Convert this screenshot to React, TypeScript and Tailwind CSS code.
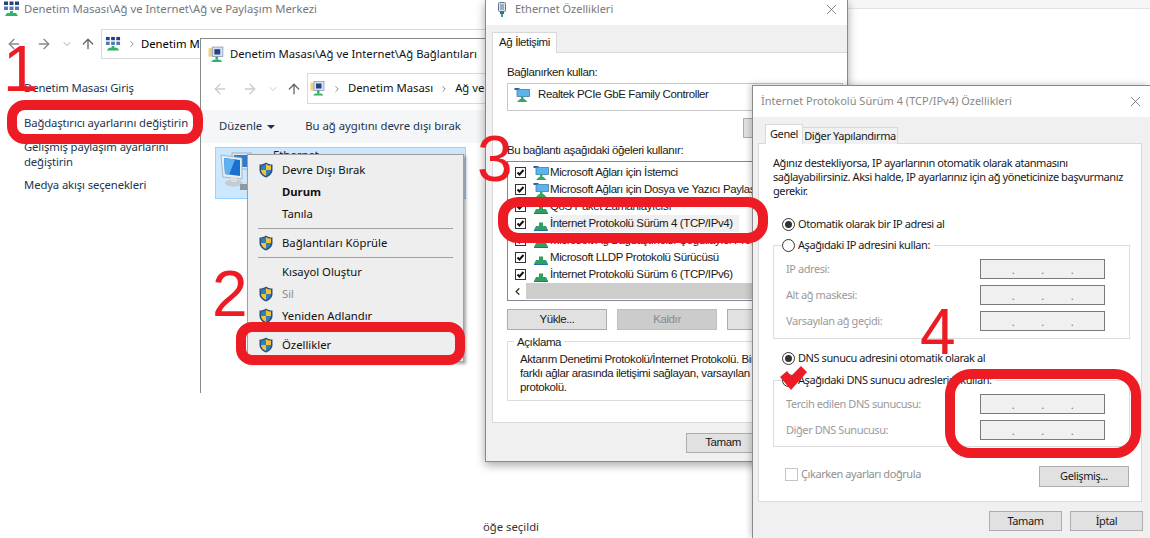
import React from 'react';
import { ArrowLeft, ArrowRight, ArrowUp, ChevronDown, ChevronLeft, ChevronRight, X } from 'lucide-react';

const NetIcon = ({ className = '' }: { className?: string }) => (
  <svg viewBox="0 0 16 16" className={`shrink-0 ${className}`}>
    <rect x="0.500" y="1" width="5" height="2" fill="#2b5f9a" />
    <rect x="3" y="2.500" width="12.500" height="7" fill="#5cb4ec" stroke="#3f7fb0" strokeWidth="0.8" />
    <rect x="7" y="9.500" width="2.500" height="3" fill="#35a860" />
    <path d="M3 15l3-3h4.500l3 3z" fill="#35a860" />
  </svg>
);

const GreenNet = () => (
  <svg viewBox="0 0 16 16" className="w-[16px] h-[16px] shrink-0">
    <path d="M6 6.500h4v3.500h3l2 4H1l2-4h3z" fill="#2f9f62" />
    <rect x="1" y="14" width="14" height="1" fill="#1f6fa8" />
  </svg>
);

const PanelIcon = ({ className = '' }: { className?: string }) => (
  <svg viewBox="0 0 17 16" className={`shrink-0 ${className}`}>
    <rect x="1" y="0.500" width="4" height="3.500" fill="#27407f" />
    <rect x="6.500" y="0.500" width="4" height="3.500" fill="#27407f" />
    <rect x="12" y="0.500" width="4" height="3.500" fill="#27407f" />
    <rect x="1" y="5.500" width="4" height="3.500" fill="#4f78b8" />
    <rect x="6.500" y="5.500" width="4" height="3.500" fill="#4f78b8" />
    <rect x="12" y="5.500" width="4" height="3.500" fill="#4f78b8" />
    <path d="M7 10h3v2h3l2 3H2l2-3h3z" fill="#33b06a" />
  </svg>
);

const FolderNetIcon = ({ className = '' }: { className?: string }) => (
  <svg viewBox="0 0 16 16" className={`shrink-0 ${className}`}>
    <rect x="0.500" y="2" width="5" height="8" fill="#efd27a" />
    <rect x="4" y="1" width="10" height="9" fill="#d7e2f2" stroke="#7f93b8" strokeWidth="0.7" />
    <rect x="6" y="3" width="5.500" height="5" fill="#27407f" />
    <rect x="7" y="10" width="2.500" height="3" fill="#33b06a" />
    <path d="M3 15l2-2h6.500l2 2z" fill="#33b06a" />
  </svg>
);

const PlugIcon = () => (
  <svg viewBox="0 0 10 15" className="w-[10px] h-[15px] shrink-0">
    <rect x="1.500" y="0.500" width="7" height="9" rx="1" fill="#dce5ee" stroke="#61768c" strokeWidth="1" />
    <rect x="3.500" y="2" width="1" height="6" fill="#61768c" />
    <rect x="5.500" y="2" width="1" height="6" fill="#61768c" />
    <rect x="3" y="9.500" width="4" height="2.500" fill="#2d6ea8" />
    <rect x="4" y="12" width="2" height="3" fill="#33b06a" />
  </svg>
);

const PcIcon = () => (
  <svg viewBox="0 0 34 40" className="w-[34px] h-[40px] shrink-0">
    <rect x="13" y="2" width="19" height="16" fill="#dfe7ef" stroke="#8fa3b5" strokeWidth="0.8" />
    <rect x="15" y="4" width="15" height="12" fill="#2e7ccb" />
    <path d="M2 4l21 3v21L4 26z" fill="#e6edf3" stroke="#9aaaba" strokeWidth="0.8" />
    <path d="M5 7l16 2v16L6 23z" fill="#1a6fd0" />
    <path d="M5 7l11 1.500-6 15.500-4-1z" fill="#5fb0f0" />
    <ellipse cx="15" cy="32" rx="9" ry="3.500" fill="#c4ccd2" />
    <rect x="12" y="26" width="6" height="5" fill="#d7dde2" />
    <rect x="21" y="33" width="9" height="6" fill="#8f989f" />
  </svg>
);

const Shield = () => (
  <svg viewBox="0 0 14 16" className="w-[14px] h-[16px] shrink-0">
    <path d="M7 0.500C5 2 3 2.500 0.500 2.500V8c0 3.500 3 6 6.500 7.500 3.500-1.500 6.500-4 6.500-7.500V2.500C11 2.500 9 2 7 0.500z" fill="#2a4f7c" />
    <path d="M7 2v6H2V3.600C4 3.500 5.500 3 7 2z" fill="#2f7fc0" />
    <path d="M7 2c1.500 1 3 1.500 5 1.600V8H7z" fill="#f0c435" />
    <path d="M2 8h5v6C4.500 13 2.200 11 2 8z" fill="#f0c435" />
    <path d="M7 8h5c-.2 3-2.500 5-5 6z" fill="#2f7fc0" />
  </svg>
);

const Check = () => (
  <span className="w-[11px] h-[11px] border border-[#333] bg-white flex items-center justify-center shrink-0">
    <svg viewBox="0 0 9 9" className="w-[9px] h-[9px]">
      <path d="M1.500 4.500l2 2 4-4.500" fill="none" stroke="#111" strokeWidth="2" />
    </svg>
  </span>
);

const Radio = ({ on }: { on?: boolean }) => (
  <span className="w-[13px] h-[13px] rounded-full border border-[#333] bg-white flex items-center justify-center shrink-0">
    {on && <span className="w-[7px] h-[7px] rounded-full bg-[#333]" />}
  </span>
);

const MenuRow = ({ label, shield, bold, muted }: { label: string; shield?: boolean; bold?: boolean; muted?: boolean }) => (
  <div className="h-[22px] flex items-center pl-[11px]">
    <span className="w-[23px] shrink-0">{shield && <Shield />}</span>
    <span className={`${bold ? 'font-bold text-[#111]' : muted ? 'text-[#8f8f8f]' : 'text-[#111]'}`}>{label}</span>
  </div>
);

const ListRow = ({ label, net, bg }: { label: string; net?: boolean; bg?: boolean }) => (
  <div className="h-[17px] flex items-center pl-[7px]">
    <Check />
    <span className="ml-[7px]">{net ? <NetIcon className="w-[16px] h-[16px]" /> : <GreenNet />}</span>
    <span className={`whitespace-nowrap ml-[1px] pr-[6px] ${bg ? 'bg-[#f0f0f0]' : ''}`}>{label}</span>
  </div>
);

const IpField = ({ label }: { label: string }) => (
  <div className="h-[20px] flex items-center justify-between pl-[12px] pr-[24px] mb-[6px]">
    <span className="text-[#9a9a9a]">{label}</span>
    <span className="w-[125px] h-[20px] border border-[#7a7a7a] bg-[#f0f0f0] flex items-center justify-center gap-[27px] text-[#777] leading-none">
      <span>.</span>
      <span>.</span>
      <span>.</span>
    </span>
  </div>
);

const Btn = ({ label, className = '' }: { label: string; className?: string }) => (
  <div className={`h-[21px] border border-[#adadad] bg-[#e1e1e1] flex items-center justify-center shrink-0 ${className}`}>{label}</div>
);

const Ring = ({ className }: { className: string }) => (
  <div className={`absolute border-[10px] border-[#ed1c24] ${className}`} />
);

const Digit = ({ value, className }: { value: string; className: string }) => (
  <div className={`absolute text-[64px] leading-none text-[#ed1c24] font-['Liberation_Sans',sans-serif] ${className}`}>{value}</div>
);

const App: React.FC = () => {
  return (
    <div className="relative w-[1150px] h-[538px] overflow-hidden bg-white text-[11.3px] text-[#1a1a1a] font-['Noto_Sans',sans-serif]">

      {/* Ağ ve Paylaşım Merkezi */}
      <div className="absolute left-0 top-0 w-[486px] h-[538px]">
        <div className="h-[18px] pl-[3px] flex items-center gap-[4px] text-[#777]">
          <PanelIcon className="w-[17px] h-[16px]" />
          <span className="whitespace-nowrap">Denetim Masası\Ağ ve Internet\Ağ ve Paylaşım Merkezi</span>
        </div>
        <div className="mt-[11px] h-[30px] flex items-center pl-[6px]">
          <ArrowLeft size={16} className="text-[#888] shrink-0" />
          <ArrowRight size={16} className="text-[#888] shrink-0 ml-[14px]" />
          <ChevronDown size={12} className="text-[#aaa] shrink-0 ml-[9px]" />
          <ArrowUp size={16} className="text-[#666] shrink-0 ml-[7px]" />
          <div className="ml-[5px] flex-1 h-[30px] border border-[#d9d9d9] flex items-center pl-[3px]">
            <PanelIcon className="w-[16px] h-[16px]" />
            <ChevronRight size={10} className="text-[#777] ml-[6px]" />
            <span className="ml-[4px] whitespace-nowrap text-black">Denetim Masası</span>
          </div>
        </div>
        <div className="pl-[24px] leading-[15px] text-[#1c3450] tracking-[-0.12px]">
          <div className="mt-[21px]">Denetim Masası Giriş</div>
          <div className="mt-[20px] whitespace-nowrap">Bağdaştırıcı ayarlarını değiştirin</div>
          <div className="mt-[9px] w-[170px]">Gelişmiş paylaşım ayarlarını değiştirin</div>
          <div className="mt-[8px]">Medya akışı seçenekleri</div>
        </div>
      </div>

      {/* Ağ Bağlantıları */}
      <div className="absolute left-[200px] top-[38px] w-[286px] h-[355px] bg-white border-l border-t border-[#8a8a8a] overflow-hidden">
        <div className="h-[30px] pl-[7px] flex items-center gap-[5px] text-[#111]">
          <FolderNetIcon className="w-[17px] h-[17px]" />
          <span className="whitespace-nowrap">Denetim Masası\Ağ ve Internet\Ağ Bağlantıları</span>
        </div>
        <div className="mt-[4px] h-[31px] flex items-center pl-[11px]">
          <ArrowLeft size={16} className="text-[#ccc] shrink-0" />
          <ArrowRight size={16} className="text-[#ccc] shrink-0 ml-[14px]" />
          <ChevronDown size={12} className="text-[#ccc] shrink-0 ml-[9px]" />
          <ArrowUp size={16} className="text-[#666] shrink-0 ml-[7px]" />
          <div className="ml-[5px] flex-1 h-[31px] border border-[#d9d9d9] flex items-center pl-[2px]">
            <FolderNetIcon className="w-[16px] h-[17px]" />
            <ChevronRight size={10} className="text-[#777] ml-[6px]" />
            <span className="ml-[6px] whitespace-nowrap text-[#111]">Denetim Masası</span>
            <ChevronRight size={10} className="text-[#777] ml-[6px]" />
            <span className="ml-[6px] whitespace-nowrap text-[#111]">Ağ ve</span>
          </div>
        </div>
        <div className="mt-[6px] h-[33px] bg-[#f5f6f7] flex items-center pl-[18px] text-[#1c3450] whitespace-nowrap">
          <span>Düzenle</span>
          <span className="ml-[5px] w-0 h-0 border-x-[4px] border-x-transparent border-t-[4px] border-t-[#1c3450]" />
          <span className="ml-[30px]">Bu ağ aygıtını devre dışı bırak</span>
        </div>
        <div className="ml-[14px] mt-[4px] w-[251px] h-[52px] bg-[#cce8ff] border border-[#99d1ff] pl-[3px] pt-[3px] flex gap-[20px]">
          <PcIcon />
          <span className="-mt-[3px] leading-[14px]">Ethernet</span>
        </div>
      </div>

      {/* Bağlam menüsü */}
      <div className="absolute left-[247px] top-[154px] w-[217px] h-[208px] bg-[#eeeeee] border border-[#a0a0a0] shadow-[2px_2px_3px_rgba(0,0,0,0.35)] pt-[4px]">
        <MenuRow label="Devre Dışı Bırak" shield />
        <MenuRow label="Durum" bold />
        <MenuRow label="Tanıla" />
        <div className="mx-[10px] my-[3px] border-t border-[#a0a0a0]" />
        <MenuRow label="Bağlantıları Köprüle" shield />
        <div className="mx-[10px] my-[3px] border-t border-[#a0a0a0]" />
        <MenuRow label="Kısayol Oluştur" />
        <MenuRow label="Sil" shield muted />
        <MenuRow label="Yeniden Adlandır" shield />
        <div className="mt-[7px]">
          <MenuRow label="Özellikler" shield />
        </div>
      </div>

      {/* Sağ üstteki arka pencere şeridi */}
      <div className="absolute left-[848px] top-0 w-[302px] h-[9px] bg-[#f5f6f7] border-b border-[#e3e3e3]" />

      {/* Ethernet Özellikleri */}
      <div className="absolute left-[485px] top-0 w-[363px] h-[462px] bg-[#f0f0f0] border-l border-r border-b border-[#8a8a8a] shadow-[0_3px_9px_rgba(0,0,0,0.35)] font-['Liberation_Sans',sans-serif] text-[11.5px] tracking-[-0.4px] overflow-hidden">
        <div className="h-[25px] bg-white pl-[11px] pr-[7px] pb-[6px] flex items-center justify-between text-[#777]">
          <div className="flex items-center gap-[8px] font-['Noto_Sans',sans-serif] text-[11px] tracking-normal">
            <PlugIcon />
            <span>Ethernet Özellikleri</span>
          </div>
          <X size={17} strokeWidth={1} className="text-[#555]" />
        </div>
        <div className="pl-[6px] pt-[7px]">
          <div className="w-[65px] h-[21px] bg-white border border-b-0 border-[#d9d9d9] flex items-center justify-center relative z-10 -mb-px">Ağ İletişimi</div>
          <div className="w-[360px] h-[371px] bg-white border border-[#d9d9d9] pl-[14px] pr-[8px] pt-[12px]">
            <div className="leading-[14px]">Bağlanırken kullan:</div>
            <div className="mt-[4px] h-[28px] border border-[#c8c8c8] bg-white flex items-center pl-[6px] gap-[8px] pb-[4px]">
              <NetIcon className="w-[16px] h-[16px]" />
              <span>Realtek PCIe GbE Family Controller</span>
            </div>
            <div className="mt-[7px] flex justify-end h-[20px]">
              <Btn label="Yapılandır..." className="w-[100px] !h-[20px]" />
            </div>
            <div className="mt-[5px] leading-[14px] whitespace-nowrap">Bu bağlantı aşağıdaki öğeleri kullanır:</div>
            <div className="mt-[4px] h-[140px] border border-[#828790] bg-white overflow-hidden">
              <div className="pt-[2px]">
                <ListRow label="Microsoft Ağları için İstemci" net />
                <ListRow label="Microsoft Ağları için Dosya ve Yazıcı Paylaşımı" net />
                <ListRow label="QoS Paket Zamanlayıcısı" />
                <ListRow label="İnternet Protokolü Sürüm 4 (TCP/IPv4)" bg />
                <ListRow label="Microsoft Ağ Bağdaştırıcısı Çoğullayıcı Protokolü" />
                <ListRow label="Microsoft LLDP Protokolü Sürücüsü" />
                <ListRow label="İnternet Protokolü Sürüm 6 (TCP/IPv6)" />
              </div>
              <div className="h-[16px] bg-[#cdcdcd] flex">
                <span className="w-[18px] bg-white flex items-center justify-center">
                  <ChevronLeft size={11} strokeWidth={3} className="text-[#333]" />
                </span>
              </div>
            </div>
            <div className="mt-[8px] flex gap-[10px]">
              <Btn label="Yükle..." className="w-[100px]" />
              <Btn label="Kaldır" className="w-[100px] !bg-[#cccccc] text-[#8a8a8a] !border-[#bfbfbf]" />
              <Btn label="Özellikler" className="w-[100px]" />
            </div>
            <div className="relative mt-[11px] h-[60px] border border-[#dcdcdc] pl-[12px] pt-[10px] leading-[14px] whitespace-nowrap">
              <span className="absolute left-[6px] -top-[7px] bg-white px-[3px]">Açıklama</span>
              <div>Aktarım Denetimi Protokolü/İnternet Protokolü. Bir</div>
              <div>farklı ağlar arasında iletişimi sağlayan, varsayılan geniş</div>
              <div>protokolü.</div>
            </div>
          </div>
          <div className="mt-[10px] pl-[194px]">
            <Btn label="Tamam" className="w-[74px] !h-[20px]" />
          </div>
        </div>
      </div>

      {/* IPv4 Özellikleri */}
      <div className="absolute left-[752px] top-[85px] w-[398px] h-[453px] bg-[#f0f0f0] border-l border-t border-[#8a8a8a] shadow-[-2px_-1px_6px_rgba(0,0,0,0.2)] text-[11px] tracking-[-0.42px]">
        <div className="h-[31px] bg-white pl-[8px] pr-[6px] pb-[1px] flex items-center justify-between text-[#888] tracking-normal">
          <span className="whitespace-nowrap">İnternet Protokolü Sürüm 4 (TCP/IPv4) Özellikleri</span>
          <X size={17} strokeWidth={1} className="text-[#555]" />
        </div>
        <div className="pl-[5px] pt-[7px]">
          <div className="flex items-end pl-[7px] h-[20px] relative z-10 -mb-px">
            <div className="w-[38px] h-[20px] bg-white border border-b-0 border-[#d9d9d9] flex items-center justify-center">Genel</div>
            <div className="w-[95px] h-[17px] bg-[#f0f0f0] border border-l-0 border-b-0 border-[#d9d9d9] flex items-center justify-center whitespace-nowrap">Diğer Yapılandırma</div>
          </div>
          <div className="w-[384px] h-[359px] bg-white border border-[#d9d9d9] pl-[14px] pr-[11px] pt-[12px]">
            <div className="leading-[14px]">
              Ağınız destekliyorsa, IP ayarlarının otomatik olarak atanmasını<br />
              sağlayabilirsiniz. Aksi halde, IP ayarlarınız için ağ yöneticinize başvurmanız<br />
              gerekir.
            </div>
            <div className="mt-[18px] h-[16px] pl-[9px] flex items-center gap-[3px]">
              <Radio on />
              <span>Otomatik olarak bir IP adresi al</span>
            </div>
            <div className="relative mt-[13px] h-[94px] border border-[#dcdcdc] pt-[13px]">
              <div className="absolute left-[8px] -top-[9px] bg-white pr-[4px] h-[16px] flex items-center gap-[3px]">
                <Radio />
                <span>Aşağıdaki IP adresini kullan:</span>
              </div>
              <IpField label="IP adresi:" />
              <IpField label="Alt ağ maskesi:" />
              <IpField label="Varsayılan ağ geçidi:" />
            </div>
            <div className="mt-[11px] h-[16px] pl-[9px] flex items-center gap-[3px]">
              <Radio on />
              <span>DNS sunucu adresini otomatik olarak al</span>
            </div>
            <div className="relative mt-[14px] h-[67px] border border-[#dcdcdc] pt-[13px]">
              <div className="absolute left-[8px] -top-[9px] bg-white pr-[4px] h-[16px] flex items-center gap-[3px]">
                <Radio />
                <span>Aşağıdaki DNS sunucu adreslerini kullan:</span>
              </div>
              <IpField label="Tercih edilen DNS sunucusu:" />
              <IpField label="Diğer DNS Sunucusu:" />
            </div>
            <div className="mt-[19px] flex items-start justify-between pl-[12px] pr-[1px]">
              <div className="flex items-center gap-[3px] text-[#8f8f8f]">
                <span className="w-[13px] h-[13px] border border-[#c4c4c4]" />
                <span>Çıkarken ayarları doğrula</span>
              </div>
              <Btn label="Gelişmiş..." className="w-[90px]" />
            </div>
          </div>
          <div className="mt-[9px] pl-[231px] flex gap-[8px]">
            <Btn label="Tamam" className="w-[73px] !h-[20px]" />
            <Btn label="İptal" className="w-[73px] !h-[20px]" />
          </div>
        </div>
      </div>

      {/* Alt durum çubuğu parçası */}
      <div className="absolute left-[483px] top-[519px] text-[#333] whitespace-nowrap">öğe seçildi</div>

      {/* Kırmızı işaretler */}
      <Ring className="left-[7px] top-[100px] w-[196px] h-[44px] rounded-[18px]" />
      <Ring className="left-[236px] top-[322px] w-[229px] h-[43px] rounded-[16px]" />
      <Ring className="left-[498px] top-[197px] w-[270px] h-[46px] rounded-[20px]" />
      <Ring className="left-[945px] top-[369px] w-[196px] h-[89px] rounded-[26px]" />
      <Digit value="1" className="left-[3px] top-[37px]" />
      <Digit value="2" className="left-[212px] top-[262px]" />
      <Digit value="3" className="left-[477px] top-[127px]" />
      <Digit value="4" className="left-[920px] top-[300px]" />
      <svg viewBox="0 0 27 24" className="absolute left-[780px] top-[366px] w-[27px] h-[24px]">
        <path d="M0 11l7-6 4 5L21 0l6 6-16 18z" fill="#ed1c24" />
      </svg>
    </div>
  );
};

export default App;
